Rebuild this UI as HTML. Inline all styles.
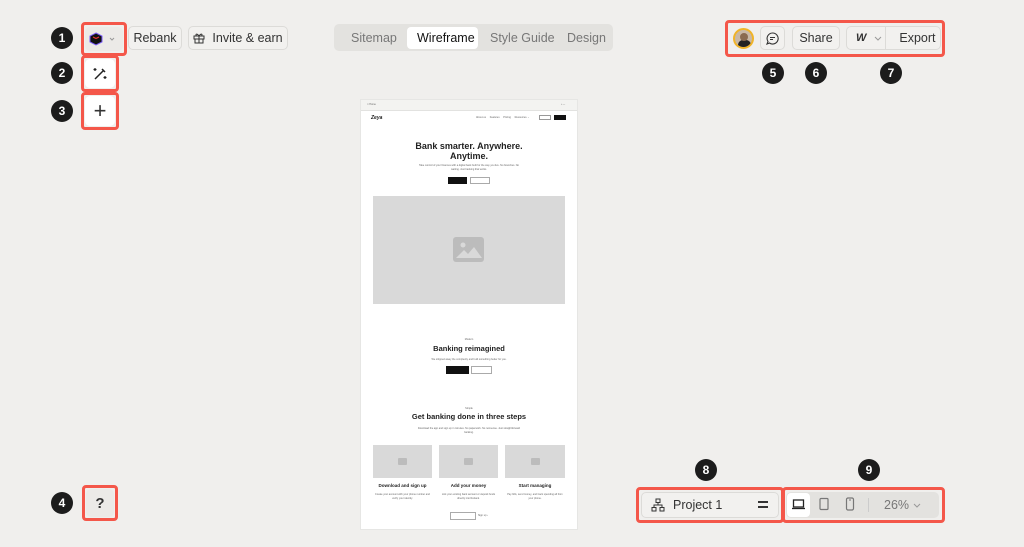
<!DOCTYPE html>
<html><head><meta charset="utf-8"><style>
*{box-sizing:border-box;margin:0;padding:0}
body{width:1024px;height:547px;background:#f0efed;font-family:"Liberation Sans",sans-serif;position:relative;overflow:hidden;color:#222}
.a{position:absolute}
.badge{position:absolute;width:22px;height:22px;border-radius:50%;background:#1c1c1c;color:#fff;font-size:12px;font-weight:bold;display:flex;align-items:center;justify-content:center}
.red{position:absolute;border:3px solid #f4574a;border-radius:4px}
.btn{position:absolute;border:1px solid #dcdbd8;border-radius:5px;background:#f2f1ef;display:flex;align-items:center;justify-content:center;font-size:12.5px;color:#333}
.wbtn{background:#fff}
.pv{position:absolute;left:361px;top:100px;width:216px;height:429px;background:#fff;outline:1px solid #e6e6e4}
.c{position:absolute;left:0;width:216px;text-align:center}
.g{background:#d9d9d9}
.tiny{font-size:2.5px;color:#666}
</style></head><body>

<div class="badge" style="left:51px;top:27px">1</div>
<div class="badge" style="left:51px;top:62px">2</div>
<div class="badge" style="left:51px;top:100px">3</div>
<div class="badge" style="left:51px;top:492px">4</div>
<div class="red" style="left:81px;top:22px;width:46px;height:34px"></div>
<div class="btn" style="left:85px;top:27px;width:38px;height:24px;border:none;background:#eceae7">
<svg width="30" height="14" viewBox="0 0 30 14"><path d="M7 1l6 3v6l-6 3-6-3V4z" fill="#111" stroke="#7a5af8" stroke-width="1"/><path d="M4 5l3 1.5L10 5" stroke="#e33" stroke-width="1.2" fill="none"/><path d="M21 6l2 2 2-2" stroke="#999" fill="none"/></svg></div>
<div class="btn" style="left:128px;top:26px;width:54px;height:24px">Rebank</div>
<div class="btn" style="left:188px;top:26px;width:100px;height:24px"><svg width="12" height="12" viewBox="0 0 12 12" style="margin-right:7px"><rect x="1" y="4" width="10" height="3" fill="none" stroke="#333"/><rect x="2" y="7" width="8" height="4" fill="none" stroke="#333"/><path d="M6 4v7M6 4C4 1 2 2 3.5 4M6 4c2-3 4-2 2.5 0" stroke="#333" fill="none"/></svg>Invite &amp; earn</div>
<div class="red" style="left:81px;top:55px;width:38px;height:37px"></div>
<div class="btn wbtn" style="left:85px;top:59px;width:30px;height:29px;border:none"><svg width="16" height="16" viewBox="0 0 16 16"><path d="M3 13L12 4M10 3l3 3" stroke="#222" stroke-width="1.5" fill="none"/><path d="M3 2v3M1.5 3.5h3M13 10v3M11.5 11.5h3" stroke="#222" stroke-width="1.2"/></svg></div>
<div class="red" style="left:81px;top:92px;width:38px;height:38px"></div>
<div class="btn wbtn" style="left:85px;top:96px;width:30px;height:30px;border:none;font-size:22px;font-weight:300">+</div>
<div class="red" style="left:82px;top:485px;width:36px;height:36px"></div>
<div class="btn" style="left:86px;top:489px;width:28px;height:28px;border:none;background:#eceae7;font-size:15px;font-weight:bold">?</div>

<div class="a" style="left:334px;top:24px;width:279px;height:27px;background:#e3e2df;border-radius:5px"></div>
<div class="a" style="left:407px;top:27px;width:71px;height:22px;background:#fff;border-radius:4px"></div>
<div class="a" style="left:351px;top:31px;font-size:12.5px;color:#777">Sitemap</div>
<div class="a" style="left:417px;top:31px;font-size:12.5px;color:#111">Wireframe</div>
<div class="a" style="left:490px;top:31px;font-size:12.5px;color:#777">Style Guide</div>
<div class="a" style="left:567px;top:31px;font-size:12.5px;color:#777">Design</div>

<div class="red" style="left:725px;top:20px;width:220px;height:37px"></div>
<div class="a" style="left:733px;top:28px;width:21px;height:21px;border-radius:50%;background:#c9b8a6;border:2px solid #f0b429;overflow:hidden"><div style="position:absolute;left:3px;top:10px;width:13px;height:9px;background:#222;border-radius:5px 5px 0 0"></div><div style="position:absolute;left:5px;top:3px;width:8px;height:8px;background:#8a6a50;border-radius:50%"></div></div>
<div class="btn" style="left:760px;top:26px;width:25px;height:24px"><svg width="13" height="13" viewBox="0 0 13 13"><path d="M6.5 1a5.5 5.5 0 1 1-3 10L1 12l1-2.5A5.5 5.5 0 0 1 6.5 1z" fill="none" stroke="#333" stroke-width="1.1"/><path d="M4 5.5h5M4 7.5h3" stroke="#333"/></svg></div>
<div class="btn" style="left:792px;top:26px;width:48px;height:24px">Share</div>
<div class="btn" style="left:846px;top:26px;width:95px;height:24px;justify-content:flex-start"><span style="font-weight:900;font-style:italic;font-size:11px;margin-left:9px">W</span><svg width="10" height="8" viewBox="0 0 10 8" style="margin-left:7px"><path d="M2 3l3 3 3-3" stroke="#999" fill="none"/></svg><span style="position:absolute;left:38px;top:0;height:22px;border-left:1px solid #dcdbd8"></span><span style="margin-left:16px">Export</span></div>
<div class="badge" style="left:762px;top:62px">5</div>
<div class="badge" style="left:805px;top:62px">6</div>
<div class="badge" style="left:880px;top:62px">7</div>

<div class="badge" style="left:695px;top:459px">8</div>
<div class="badge" style="left:858px;top:459px">9</div>
<div class="red" style="left:636px;top:487px;width:148px;height:36px"></div>
<div class="red" style="left:782px;top:487px;width:163px;height:36px"></div>
<div class="btn" style="left:641px;top:492px;width:138px;height:26px;justify-content:flex-start"><svg width="14" height="14" viewBox="0 0 14 14" style="margin-left:9px"><rect x="5" y="1" width="4" height="3.5" fill="none" stroke="#333"/><rect x="1" y="9.5" width="4" height="3.5" fill="none" stroke="#333"/><rect x="9" y="9.5" width="4" height="3.5" fill="none" stroke="#333"/><path d="M7 4.5v2.5M3 9.5V7h8v2.5" stroke="#333" fill="none"/></svg><span style="margin-left:8px;font-size:12.5px">Project 1</span><span style="position:absolute;right:10px;top:8px;width:10px;height:7px;border-top:2px solid #333;border-bottom:2px solid #333"></span></div>
<div class="a" style="left:786px;top:492px;width:153px;height:26px;background:#e3e2df;border-radius:5px"></div>
<div class="a" style="left:787px;top:493px;width:23px;height:24px;background:#fff;border-radius:4px"></div>
<svg class="a" style="left:791px;top:498px" width="15" height="13" viewBox="0 0 15 13"><rect x="2.5" y="2" width="10" height="7" fill="none" stroke="#222" stroke-width="1.3"/><path d="M1 10.5h13" stroke="#222" stroke-width="1.3"/></svg>
<svg class="a" style="left:818px;top:497px" width="12" height="15" viewBox="0 0 12 15"><rect x="2" y="1.5" width="8" height="11" rx="1" fill="none" stroke="#777" stroke-width="1.2"/></svg>
<svg class="a" style="left:844px;top:497px" width="12" height="15" viewBox="0 0 12 15"><rect x="2.5" y="1" width="7" height="12" rx="1.5" fill="none" stroke="#777" stroke-width="1.2"/><path d="M5 3h2" stroke="#777"/></svg>
<div class="a" style="left:868px;top:498px;height:14px;border-left:1px solid #ccc"></div>
<div class="a" style="left:884px;top:498px;font-size:12.5px;color:#777">26%</div>
<svg class="a" style="left:912px;top:501px" width="10" height="8" viewBox="0 0 10 8"><path d="M2 3l3 3 3-3" stroke="#999" fill="none"/></svg>

<div class="pv">
 <div class="a" style="left:0;top:0;width:216px;height:11px;background:#f3f3f1;border-bottom:1px solid #e2e2e0"></div>
 <div class="a tiny" style="left:6px;top:3px">□ Home</div>
 <div class="a tiny" style="left:200px;top:3px">▪ —</div>
 <div class="a" style="left:10px;top:15px;font-size:5px;font-style:italic;font-weight:bold">Zeya</div>
 <div class="a tiny" style="left:115px;top:16px;word-spacing:3px">About·us Features Pricing Resources·⌄</div>
 <div class="a" style="left:178px;top:15px;width:12px;height:5px;border:0.5px solid #999"></div>
 <div class="a" style="left:193px;top:15px;width:12px;height:5px;background:#111"></div>
 <div class="c" style="top:41px;font-size:9px;font-weight:bold;line-height:10px">Bank smarter. Anywhere.<br>Anytime.</div>
 <div class="c tiny" style="top:64px;line-height:3.5px">Take control of your finances with a digital bank built for the way you live. No branches. No<br>waiting. Just banking that works.</div>
 <div class="a" style="left:87px;top:77px;width:19px;height:7px;background:#111"></div>
 <div class="a" style="left:109px;top:77px;width:20px;height:7px;border:0.6px solid #aaa"></div>
 <div class="a g" style="left:12px;top:96px;width:192px;height:108px"></div>
 <svg class="a" style="left:92px;top:137px" width="31" height="25" viewBox="0 0 31 25"><rect width="31" height="25" rx="3" fill="#bcbcbc"/><circle cx="10" cy="8" r="2.5" fill="#d9d9d9"/><path d="M3 21l8-8 4 4 6-7 8 11z" fill="#d9d9d9"/></svg>
 <div class="c tiny" style="top:238px">Modern</div>
 <div class="c" style="top:244px;font-size:7.5px;font-weight:bold">Banking reimagined</div>
 <div class="c tiny" style="top:258px">We stripped away the complexity and built something better for you.</div>
 <div class="a" style="left:85px;top:266px;width:23px;height:8px;background:#111"></div>
 <div class="a" style="left:110px;top:266px;width:21px;height:8px;border:0.6px solid #aaa"></div>
 <div class="c tiny" style="top:307px">Simple</div>
 <div class="c" style="top:312px;font-size:7.5px;font-weight:bold">Get banking done in three steps</div>
 <div class="c tiny" style="top:327px;line-height:3.5px">Download the app and sign up in minutes. No paperwork. No nonsense. Just straightforward<br>banking.</div>
 <div class="a g" style="left:12px;top:345px;width:59px;height:33px"></div>
 <div class="a g" style="left:78px;top:345px;width:59px;height:33px"></div>
 <div class="a g" style="left:144px;top:345px;width:60px;height:33px"></div>
 <div class="a" style="left:37px;top:358px;width:9px;height:7px;background:#bcbcbc;border-radius:1px"></div>
 <div class="a" style="left:103px;top:358px;width:9px;height:7px;background:#bcbcbc;border-radius:1px"></div>
 <div class="a" style="left:170px;top:358px;width:9px;height:7px;background:#bcbcbc;border-radius:1px"></div>
 <div class="a" style="left:12px;top:383px;width:59px;text-align:center;font-size:4.5px;font-weight:bold">Download and sign up</div>
 <div class="a" style="left:78px;top:383px;width:59px;text-align:center;font-size:4.5px;font-weight:bold">Add your money</div>
 <div class="a" style="left:144px;top:383px;width:60px;text-align:center;font-size:4.5px;font-weight:bold">Start managing</div>
 <div class="a tiny" style="left:14px;top:393px;width:55px;text-align:center;line-height:3.5px">Create your account with your phone number and verify your identity.</div>
 <div class="a tiny" style="left:80px;top:393px;width:55px;text-align:center;line-height:3.5px">Link your existing bank account or deposit funds directly into Rebank.</div>
 <div class="a tiny" style="left:146px;top:393px;width:56px;text-align:center;line-height:3.5px">Pay bills, send money, and track spending all from your phone.</div>
 <div class="a" style="left:89px;top:412px;width:26px;height:8px;border:0.6px solid #aaa"></div>
 <div class="a tiny" style="left:117px;top:414px">Sign up ›</div>
</div>
</body></html>
